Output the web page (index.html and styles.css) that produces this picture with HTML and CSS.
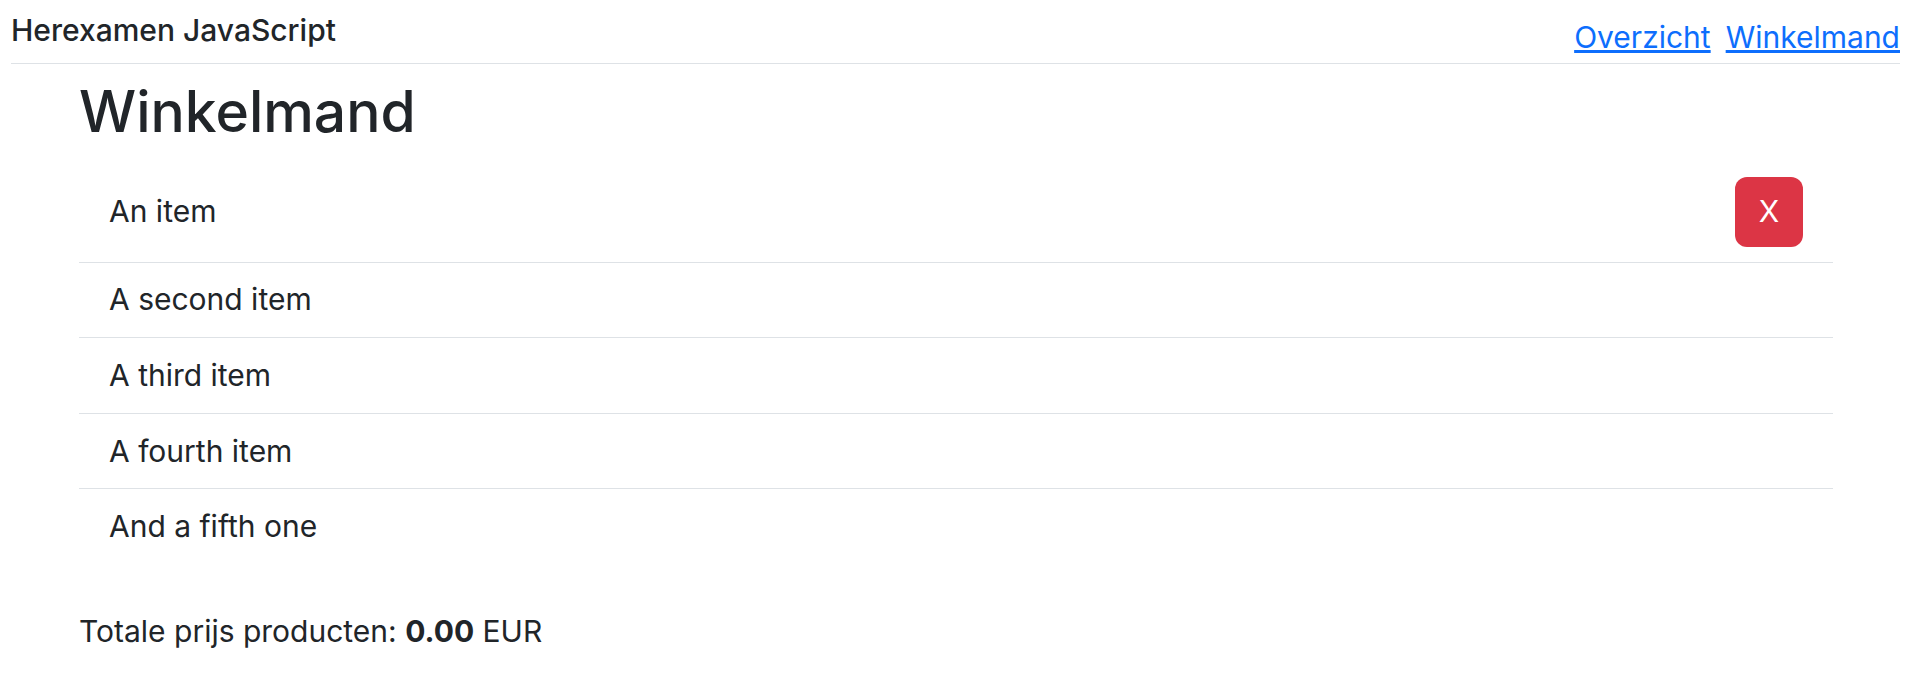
FILE: index.html
```html
<!DOCTYPE html>
<html lang="nl">
<head>
<meta charset="utf-8">
<title>Herexamen JavaScript</title>
<link rel="stylesheet" href="styles.css">
</head>
<body>
<header class="topbar">
  <div class="brand">Herexamen JavaScript</div>
  <nav class="nav">
    <a href="#" class="nav-link">Overzicht</a>
    <a href="#" class="nav-link">Winkelmand</a>
  </nav>
</header>
<main class="container">
  <h1 class="title">Winkelmand</h1>
  <ul class="cart-list">
    <li class="cart-item cart-item-first">
      <span>An item</span>
      <button class="btn-remove" type="button">X</button>
    </li>
    <li class="cart-item">A second item</li>
    <li class="cart-item">A third item</li>
    <li class="cart-item">A fourth item</li>
    <li class="cart-item">And a fifth one</li>
  </ul>
  <p class="total">Totale prijs producten: <strong>0.00</strong> EUR</p>
</main>
</body>
</html>
```

FILE: styles.css
```css
html, body {
  margin: 0;
  padding: 0;
  background: #fff;
}

body {
  font-family: Inter, "Noto Sans", sans-serif;
  color: #212529;
}

.topbar {
  display: flex;
  justify-content: space-between;
  align-items: flex-start;
  height: 63px;
  margin: 0 13px 0 11px;
  border-bottom: 1px solid #dee2e6;
}

.brand {
  margin-top: 8px;
  font-size: 30px;
  font-weight: 500;
  line-height: 45px;
}

.nav {
  display: flex;
  gap: 15px;
  margin-top: 15px;
}

.nav-link {
  font-size: 30px;
  line-height: 45px;
  color: #0d6efd;
  text-decoration: underline;
}

.container {
  margin: 0 80px 0 79px;
}

.title {
  margin: 14px 0 16px;
  font-size: 57px;
  font-weight: 500;
  line-height: 68px;
}

.cart-list {
  list-style: none;
  margin: 0;
  padding: 0;
}

.cart-item {
  padding: 14.8px 30px;
  font-size: 30px;
  line-height: 45px;
  border-bottom: 1px solid #dee2e6;
}

.cart-item:last-child {
  border-bottom: none;
}

.cart-item-first {
  display: flex;
  justify-content: space-between;
  align-items: center;
}

.btn-remove {
  width: 68px;
  height: 70px;
  border: none;
  border-radius: 12px;
  background: #dc3545;
  color: #fff;
  font-family: Inter, "Noto Sans", sans-serif;
  font-size: 30px;
  line-height: 45px;
  padding: 0;
}

.total {
  margin: 45px 0 0;
  font-size: 30px;
  line-height: 45px;
}

.total strong {
  font-weight: 700;
}
```
